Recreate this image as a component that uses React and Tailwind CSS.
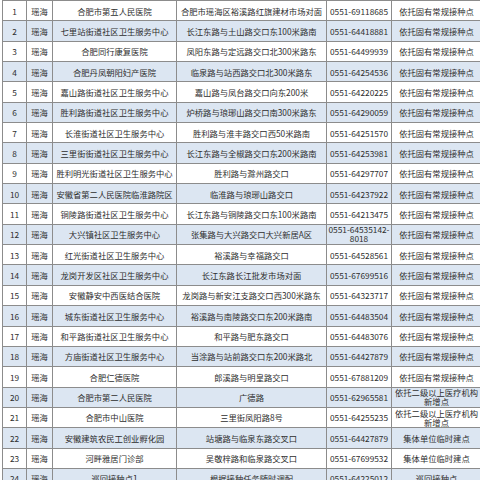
const rows = [
  ["合肥市第五人民医院", "合肥市瑶海区裕溪路红旗建材市场对面", "0551-69118685", "依托固有常规接种点"],
  ["七里站街道社区卫生服务中心", "长江东路与土山路交口东100米路南", "0551-64418881", "依托固有常规接种点"],
  ["合肥同行康复医院", "凤阳东路与定远路交口北300米路东", "0551-64499939", "依托固有常规接种点"],
  ["合肥丹凤朝阳妇产医院", "临泉路与站西路交口北300米路东", "0551-64254536", "依托固有常规接种点"],
  ["嘉山路街道社区卫生服务中心", "嘉山路与凤台路交口向东200米", "0551-64220225", "依托固有常规接种点"],
  ["胜利路街道社区卫生服务中心", "炉桥路与琅琊山路交口南300米路东", "0551-64290059", "依托固有常规接种点"],
  ["长淮街道社区卫生服务中心", "胜利路与淮丰路交口西50米路南", "0551-64251570", "依托固有常规接种点"],
  ["三里街街道社区卫生服务中心", "长江东路与全椒路交口东200米路南", "0551-64253981", "依托固有常规接种点"],
  ["胜利明光街道社区卫生服务中心", "胜利路与滁州路交口", "0551-64297707", "依托固有常规接种点"],
  ["安徽省第二人民医院临淮路院区", "临淮路与琅琊山路交口", "0551-64237922", "依托固有常规接种点"],
  ["铜陵路街道社区卫生服务中心", "长江东路与铜陵路交口东100米路南", "0551-64213475", "依托固有常规接种点"],
  ["大兴镇社区卫生服务中心", "张集路与大兴路交口大兴新居A区", ["0551-64535142-", "8018"], "依托固有常规接种点"],
  ["红光街道社区卫生服务中心", "裕溪路与幸福路交口", "0551-64528561", "依托固有常规接种点"],
  ["龙岗开发区社区卫生服务中心", "长江东路长江批发市场对面", "0551-67699516", "依托固有常规接种点"],
  ["安徽静安中西医结合医院", "龙岗路与新安江支路交口西300米路东", "0551-64323717", "依托固有常规接种点"],
  ["城东街道社区卫生服务中心", "裕溪路与南陵路交口东200米路南", "0551-64483504", "依托固有常规接种点"],
  ["和平路街道社区卫生服务中心", "和平路与肥东路交口", "0551-64483076", "依托固有常规接种点"],
  ["方庙街道社区卫生服务中心", "当涂路与站前路交口东200米路北", "0551-64427879", "依托固有常规接种点"],
  ["合肥仁德医院", "郎溪路与明皇路交口", "0551-67881209", "依托固有常规接种点"],
  ["合肥市第二人民医院", "广德路", "0551-62965581", ["依托二级以上医疗机构", "新增点"]],
  ["合肥市中山医院", "三里街凤阳路8号", "0551-64255235", ["依托二级以上医疗机构", "新增点"]],
  ["安徽建筑农民工创业孵化园", "站塘路与临泉东路交叉口", "0551-64427879", "集体单位临时建点"],
  ["河畔雅居门诊部", "吴敬梓路和临泉路交叉口", "0551-67699532", "集体单位临时建点"],
  ["巡回接种点1", "根据接种任务随时调配", "0551-64225012", "巡回接种点"],
];

function Lines({ value }) {
  if (Array.isArray(value)) {
    return value.map((line, i) => (
      <div key={i} className="leading-[9px]">
        {line}
      </div>
    ));
  }
  return value;
}

export default function App() {
  return (
    <div
      className="w-[480px] h-[480px] overflow-hidden bg-white pl-[2px] text-[#2e2e2e] text-[8.3px]"
      style={{ fontFamily: '"Noto Sans CJK SC", "Noto Sans", sans-serif' }}
    >
      <table className="w-[479px] table-fixed border-collapse">
        <colgroup>
          <col className="w-[24px]" />
          <col className="w-[26px]" />
          <col className="w-[124px]" />
          <col className="w-[150px]" />
          <col className="w-[65px]" />
          <col className="w-[90px]" />
        </colgroup>
        <tbody>
          {rows.map((row, i) => (
            <tr
              key={i}
              className={`h-[20.35px] ${i % 2 === 1 ? "bg-[#dce6f2]" : "bg-white"}`}
            >
              <td className="border border-[#8c8c8c] p-0 text-center align-middle leading-none">
                {i + 1}
              </td>
              <td className="border border-[#8c8c8c] p-0 text-center align-middle leading-none">
                瑶海
              </td>
              <td className="border border-[#8c8c8c] p-0 text-center align-middle leading-none whitespace-nowrap">
                {row[0]}
              </td>
              <td className="border border-[#8c8c8c] p-0 text-center align-middle leading-none whitespace-nowrap">
                {row[1]}
              </td>
              <td className="border border-[#8c8c8c] p-0 text-center align-middle leading-none whitespace-nowrap">
                <Lines value={row[2]} />
              </td>
              <td className="border border-[#8c8c8c] p-0 text-center align-middle leading-none whitespace-nowrap">
                <Lines value={row[3]} />
              </td>
            </tr>
          ))}
        </tbody>
      </table>
    </div>
  );
}
